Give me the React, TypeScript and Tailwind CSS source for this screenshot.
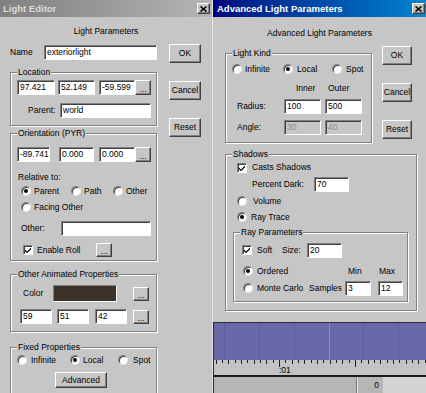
import React from 'react';

type Cls = { className?: string };

const Field: React.FC<{ value?: string; disabled?: boolean } & Cls> = ({ value = '', disabled = false, className = '' }) => (
  <div
    className={`h-[15px] shrink-0 border border-t-[#808080] border-l-[#808080] border-b-white border-r-white shadow-[inset_1px_1px_0_#404040] pl-[2px] leading-[12px] overflow-hidden whitespace-nowrap ${
      disabled ? 'bg-[#c6c6c6] text-[#8c8c8c]' : 'bg-white text-black'
    } ${className}`}
  >
    {value}
  </div>
);

const Btn: React.FC<{ children?: React.ReactNode } & Cls> = ({ children, className = '' }) => (
  <div
    className={`shrink-0 flex items-center justify-center bg-[#c6c6c6] border border-t-white border-l-white border-b-[#404040] border-r-[#404040] shadow-[inset_-1px_-1px_0_#808080] ${className}`}
  >
    {children}
  </div>
);

const Dots: React.FC<Cls> = ({ className = '' }) => (
  <Btn className={`w-[16px] h-[14px] ${className}`}>
    <span className="leading-[8px] pt-[2px]">...</span>
  </Btn>
);

const Radio: React.FC<{ checked?: boolean; label: string; gap?: string } & Cls> = ({ checked, label, gap = 'ml-[3px]', className = '' }) => (
  <div className={`flex items-center h-[12px] shrink-0 ${className}`}>
    <span className="w-[10px] h-[10px] rounded-full bg-white border border-t-[#808080] border-l-[#808080] border-b-[#e8e8e8] border-r-[#e8e8e8] shadow-[inset_1px_1px_0_#404040] flex items-center justify-center shrink-0">
      {checked && <span className="w-[4px] h-[4px] rounded-full bg-black" />}
    </span>
    <span className={`${gap} whitespace-nowrap`}>{label}</span>
  </div>
);

const Check: React.FC<{ label?: string; gap?: string } & Cls> = ({ label, gap = 'ml-[4px]', className = '' }) => (
  <div className={`flex items-center shrink-0 ${className}`}>
    <span className="w-[10px] h-[10px] bg-white border border-t-[#808080] border-l-[#808080] border-b-white border-r-white shadow-[inset_1px_1px_0_#404040] flex items-center justify-center shrink-0">
      <svg width="8" height="8" viewBox="0 0 8 8">
        <path d="M1 3.5 L3 5.5 L7 1.5 L7 3.2 L3 7.2 L1 5.2 Z" fill="#000" />
      </svg>
    </span>
    {label && <span className={`${gap} whitespace-nowrap`}>{label}</span>}
  </div>
);

const Group: React.FC<{ title: string; children?: React.ReactNode } & Cls> = ({ title, children, className = '' }) => (
  <div className={`border border-[#808080] shadow-[inset_1px_1px_0_#fff,1px_1px_0_#fff] ${className}`}>
    <div className="-mt-[6px] ml-[6px] w-fit px-[1px] bg-[#c6c6c6] h-[11px] leading-[11px] whitespace-nowrap">{title}</div>
    {children}
  </div>
);

const CloseBox: React.FC = () => (
  <Btn className="w-[13px] h-[11px]">
    <svg width="7" height="6" viewBox="0 0 7 6">
      <path d="M0.5 0.5 L6.5 5.5 M6.5 0.5 L0.5 5.5" stroke="#000" strokeWidth="1.6" />
    </svg>
  </Btn>
);

const LightEditor: React.FC = () => (
  <div className="w-[212px] shrink-0 h-full flex flex-col bg-[#c6c6c6] overflow-hidden">
    <div className="h-[17px] shrink-0 flex items-center bg-linear-to-r from-[#808080] to-[#b5b5b5] pl-[3px] pr-[2px]">
      <span className="flex-1 font-bold text-[9.5px] text-[#dcdcdc]">Light Editor</span>
      <CloseBox />
    </div>
    <div className="mt-[8px] h-[12px] leading-[12px] text-center">Light Parameters</div>
    <div className="flex">
      <div className="ml-[10px] w-[147px] shrink-0 flex flex-col">
        <div className="mt-[8px] flex items-center h-[15px]">
          <span className="w-[34px]">Name</span>
          <Field value="exteriorlight" className="w-[113px]" />
        </div>

        <Group title="Location" className="mt-[12px] pb-[7px]">
          <div className="mt-[2px] ml-[6px] flex items-center h-[15px]">
            <Field value="97.421" className="w-[38px]" />
            <Field value="52.149" className="ml-[3px] w-[37px]" />
            <Field value="-59.599" className="ml-[4px] w-[36px]" />
            <Dots className="h-[15px]" />
          </div>
          <div className="mt-[8px] ml-[17px] flex items-center h-[15px]">
            <span className="w-[32px]">Parent:</span>
            <Field value="world" className="w-[91px]" />
          </div>
        </Group>

        <Group title="Orientation (PYR)" className="mt-[7px] pb-[3px]">
          <div className="mt-[8px] ml-[6px] flex items-center h-[15px]">
            <Field value="-89.741" className="w-[33px]" />
            <Field value="0.000" className="ml-[9px] w-[35px]" />
            <Field value="0.000" className="ml-[5px] w-[36px]" />
            <Dots className="h-[15px]" />
          </div>
          <div className="mt-[10px] ml-[7px] h-[11px] leading-[11px]">Relative to:</div>
          <div className="mt-[2px] ml-[10px] flex">
            <Radio checked label="Parent" className="w-[50px]" />
            <Radio label="Path" className="w-[42px]" />
            <Radio label="Other" />
          </div>
          <div className="mt-[4px] ml-[10px] flex">
            <Radio label="Facing Other" />
          </div>
          <div className="mt-[8px] ml-[10px] flex items-center h-[15px]">
            <span className="w-[40px]">Other:</span>
            <Field className="w-[90px]" />
          </div>
          <div className="mt-[7px] ml-[12px] flex items-center h-[14px]">
            <Check label="Enable Roll" className="w-[73px]" />
            <Dots className="w-[15px]" />
          </div>
        </Group>

        <Group title="Other Animated Properties" className="mt-[13px] pb-[7px]">
          <div className="mt-[5px] ml-[12px] flex items-center h-[17px]">
            <span className="w-[30px]">Color</span>
            <div className="w-[64px] h-[17px] bg-[#3b332a] border border-t-[#808080] border-l-[#808080] border-b-white border-r-white" />
            <Dots className="ml-[16px]" />
          </div>
          <div className="mt-[7px] ml-[9px] flex items-center h-[15px]">
            <Field value="59" className="w-[32px]" />
            <Field value="51" className="ml-[5px] w-[32px]" />
            <Field value="42" className="ml-[6px] w-[32px]" />
            <Dots className="ml-[6px]" />
          </div>
        </Group>

        <Group title="Fixed Properties" className="mt-[15px] pb-[10px]">
          <div className="mt-[1px] ml-[6px] flex">
            <Radio label="Infinite" gap="ml-[4px]" className="w-[53px]" />
            <Radio checked label="Local" gap="ml-[3px]" className="w-[48px]" />
            <Radio label="Spot" gap="ml-[5px]" />
          </div>
          <Btn className="mt-[6px] ml-[44px] w-[52px] h-[16px]">Advanced</Btn>
        </Group>
      </div>

      <div className="ml-[12px] w-[32px] shrink-0 flex flex-col">
        <Btn className="mt-[7px] h-[19px]">OK</Btn>
        <Btn className="mt-[18px] h-[19px]">Cancel</Btn>
        <Btn className="mt-[18px] h-[19px]">Reset</Btn>
      </div>
    </div>
  </div>
);

const AdvancedParams: React.FC = () => (
  <div className="h-[322px] shrink-0 flex flex-col bg-[#c6c6c6] overflow-hidden">
    <div className="h-[17px] shrink-0 flex items-center bg-linear-to-r from-[#000080] to-[#1084d0] pl-[4px] pr-[1px]">
      <span className="flex-1 font-bold text-[9.5px] text-white">Advanced Light Parameters</span>
      <CloseBox />
    </div>
    <div className="mt-[10px] h-[12px] leading-[12px] text-center">Advanced Light Parameters</div>
    <div className="flex">
      <div className="ml-[12px] w-[147px] shrink-0">
        <Group title="Light Kind" className="mt-[14px] pb-[7px]">
          <div className="mt-[4px] ml-[6px] flex">
            <Radio label="Infinite" className="w-[51px]" />
            <Radio checked label="Local" gap="ml-[4px]" className="w-[49px]" />
            <Radio label="Spot" gap="ml-[4px]" />
          </div>
          <div className="mt-[8px] ml-[70px] flex h-[11px] leading-[11px]">
            <span className="w-[32px]">Inner</span>
            <span>Outer</span>
          </div>
          <div className="mt-[5px] ml-[11px] flex items-center h-[15px]">
            <span className="w-[47px]">Radius:</span>
            <Field value="100" className="w-[37px]" />
            <Field value="500" className="ml-[4px] w-[37px]" />
          </div>
          <div className="mt-[6px] ml-[11px] flex items-center h-[15px]">
            <span className="w-[47px]">Angle:</span>
            <Field value="30" disabled className="w-[37px]" />
            <Field value="40" disabled className="ml-[4px] w-[37px]" />
          </div>
        </Group>
      </div>
      <div className="ml-[10px] w-[30px] shrink-0 flex flex-col">
        <Btn className="mt-[7px] h-[19px]">OK</Btn>
        <Btn className="mt-[18px] h-[19px]">Cancel</Btn>
        <Btn className="mt-[18px] h-[19px]">Reset</Btn>
      </div>
    </div>

    <Group title="Shadows" className="mt-[11px] ml-[12px] w-[192px] pb-[8px]">
      <div className="mt-[2px] ml-[11px] flex items-center h-[11px]">
        <Check label="Casts Shadows" gap="ml-[5px]" />
      </div>
      <div className="mt-[4px] ml-[26px] flex items-center h-[14px]">
        <span className="w-[62px]">Percent Dark:</span>
        <Field value="70" className="w-[35px] h-[14px]" />
      </div>
      <div className="mt-[4px] ml-[11px] flex">
        <Radio label="Volume" gap="ml-[6px]" />
      </div>
      <div className="mt-[4px] ml-[11px] flex">
        <Radio checked label="Ray Trace" gap="ml-[4px]" />
      </div>
      <Group title="Ray Parameters" className="mt-[9px] ml-[7px] w-[175px] pb-[6px]">
        <div className="mt-[5px] ml-[8px] flex items-center h-[14px]">
          <Check label="Soft" gap="ml-[5px]" className="w-[40px]" />
          <span className="w-[25px]">Size:</span>
          <Field value="20" className="w-[35px] h-[14px]" />
        </div>
        <div className="mt-[8px] ml-[9px] flex items-center h-[12px]">
          <Radio checked label="Ordered" gap="ml-[4px]" className="w-[105px]" />
          <span className="w-[31px]">Min</span>
          <span>Max</span>
        </div>
        <div className="mt-[4px] ml-[9px] flex items-center h-[14px]">
          <Radio label="Monte Carlo" gap="ml-[4px]" className="w-[66px]" />
          <span className="w-[36px]">Samples</span>
          <Field value="3" className="w-[26px] h-[14px]" />
          <Field value="12" className="ml-[7px] w-[25px] h-[14px]" />
        </div>
      </Group>
    </Group>
  </div>
);

const Timeline: React.FC = () => {
  const ticks = Array.from({ length: 34 }, (_, i) => i - 10);
  return (
    <div className="flex-1 flex flex-col overflow-hidden">
      <div className="relative h-[38px] shrink-0 bg-[#6968a8] border-t border-l border-[#2a2a3a]">
        <svg className="absolute inset-0" width="213" height="38">
          {[10, 45, 80, 149, 184].map((x) => (
            <line key={x} x1={x + 0.5} y1="0" x2={x + 0.5} y2="38" stroke="#5d5c98" strokeWidth="1" />
          ))}
          <line x1="115.5" y1="0" x2="115.5" y2="38" stroke="#8d8cc4" strokeWidth="1" />
        </svg>
      </div>
      <div className="relative h-[15px] shrink-0 bg-[#c4c4c4] border-l border-[#2a2a3a] pl-[65px] pt-[5px] leading-[10px]">
        <svg className="absolute inset-0" width="213" height="15">
          {ticks.map((k) => {
            const x = Math.round(65 + k * 6.33) + 0.5;
            const h = k % 12 === 0 ? 7 : k % 2 === 0 ? 4 : 3;
            return <line key={k} x1={x} y1="0" x2={x} y2={h} stroke="#202020" strokeWidth="1" />;
          })}
        </svg>
        <span className="relative">:01</span>
      </div>
      <div className="h-[2px] shrink-0 bg-[#1a1a1a]" />
      <div className="flex-1 flex bg-[#b6b6b6] border-l border-[#2a2a3a]">
        <div className="w-[142px] shrink-0" />
        <div className="w-[2px] shrink-0 border-l border-[#7a7a7a] bg-[#e6e6e6]" />
        <div className="w-[25px] shrink-0 flex items-center justify-end pr-[4px]">0</div>
        <div className="flex-1 bg-[#d4d4d4]" />
      </div>
    </div>
  );
};

export default function App() {
  return (
    <div className="w-[426px] h-[393px] flex overflow-hidden bg-[#c6c6c6] text-black text-[8.5px] leading-[11px] font-['Liberation_Sans',Arial,sans-serif]">
      <LightEditor />
      <div className="flex-1 flex flex-col border-l border-[#e4e4e4]">
        <AdvancedParams />
        <Timeline />
      </div>
    </div>
  );
}
